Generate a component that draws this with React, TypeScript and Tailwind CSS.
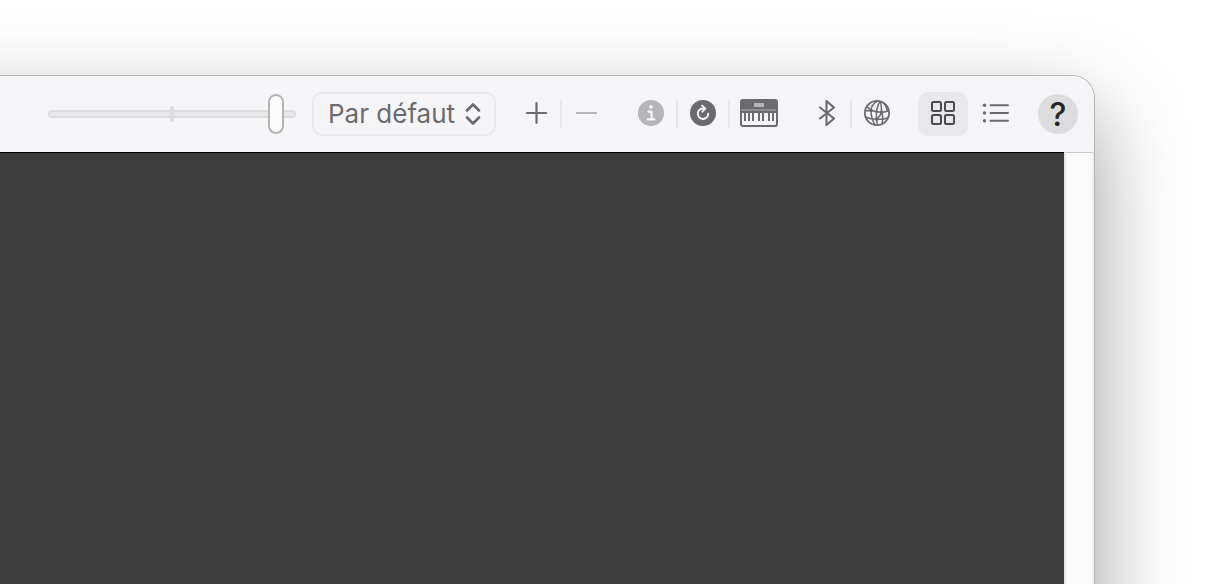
import type { ReactNode } from 'react';

interface ToolButtonProps {
  label: string;
  className: string;
  disabled?: boolean;
  children: ReactNode;
}

function ToolButton({ label, className, disabled, children }: ToolButtonProps) {
  return (
    <button type="button" aria-label={label} disabled={disabled} className={`flex h-11 shrink-0 items-center justify-center pb-0.5 ${className}`}>
      {children}
    </button>
  );
}

function Divider() {
  return <span className="h-7 w-0.5 shrink-0 bg-[#e6e6e8]" />;
}

function SizeSlider() {
  return (
    <div className="relative flex h-10 w-[248px] shrink-0 items-center">
      <span className="absolute inset-x-0 top-4 h-2 rounded-full border-2 border-[#dcdcde] bg-[#e8e8ea]" />
      <span className="absolute left-[122px] top-3 h-4 w-1 rounded-full bg-[#dcdcde]" />
      <input
        type="range"
        aria-label="Taille des icônes"
        min={0}
        max={100}
        defaultValue={95}
        className="relative h-10 w-full appearance-none bg-transparent [&::-webkit-slider-thumb]:h-10 [&::-webkit-slider-thumb]:w-4 [&::-webkit-slider-thumb]:appearance-none [&::-webkit-slider-thumb]:rounded-full [&::-webkit-slider-thumb]:border-2 [&::-webkit-slider-thumb]:border-[#b5b5b7] [&::-webkit-slider-thumb]:bg-[#fafafb]"
      />
    </div>
  );
}

function LayoutSelect() {
  return (
    <div className="relative h-11 w-[184px] shrink-0">
      <select
        aria-label="Configuration"
        className="h-full w-full appearance-none rounded-[10px] border-2 border-[#e8e8ea] bg-transparent pl-3.5 text-[26px] leading-9 text-[#6b6b6d]"
      >
        <option>Par défaut</option>
      </select>
      <svg className="pointer-events-none absolute right-3.5 top-2.5" width="18" height="24" viewBox="0 0 18 24" fill="none" stroke="#6b6b6d" strokeWidth="2.7" strokeLinecap="round" strokeLinejoin="round">
        <path d="M3 8.5 9 2.5l6 6M3 15.5l6 6 6-6" />
      </svg>
    </div>
  );
}

function PlusIcon() {
  return (
    <svg width="22" height="22" viewBox="0 0 22 22" stroke="#6b6b6d" strokeWidth="2.2" strokeLinecap="round">
      <path d="M11.5 1.2v19.6M2 11h19" />
    </svg>
  );
}

function MinusIcon() {
  return (
    <svg width="22" height="22" viewBox="0 0 22 22" stroke="#b5b5b7" strokeWidth="2.2" strokeLinecap="round">
      <path d="M2 11h19" />
    </svg>
  );
}

function InfoIcon() {
  return (
    <svg width="26" height="26" viewBox="0 0 26 26" fill="none">
      <circle cx="13" cy="13" r="13" fill="#b5b5b7" />
      <circle cx="12.8" cy="6.8" r="1.9" fill="#f6f6f8" />
      <path d="M10.4 11.6h3.2v7.7M9.8 19.4h6.6" stroke="#f6f6f8" strokeWidth="2.2" strokeLinecap="round" strokeLinejoin="round" />
    </svg>
  );
}

function ReloadIcon() {
  return (
    <svg width="26" height="26" viewBox="0 0 26 26" fill="none">
      <circle cx="13" cy="13" r="13" fill="#6b6b6d" />
      <path d="M13.8 8.6A5.2 5.2 0 1 0 18.2 13.8M12.2 5.6l3.2 3-3.2 3.1" stroke="#f6f6f8" strokeWidth="1.9" strokeLinecap="round" strokeLinejoin="round" />
    </svg>
  );
}

function KeyboardIcon() {
  return (
    <svg width="38" height="28" viewBox="0 0 38 28">
      <rect width="38" height="28" rx="3" fill="#6b6b6d" />
      <rect x="14" y="4" width="10" height="4" fill="#b5b5b7" />
      <rect x="1" y="10" width="35" height="2" fill="#8d8d8f" />
      <path d="M2 14h34v10.5a1.5 1.5 0 0 1-1.5 1.5h-31A1.5 1.5 0 0 1 2 24.5z" fill="#f6f6f8" />
      <path d="M4 14h2v8H4zM8 14h2v8H8zM12 14h2v8h-2zM18 14h2v8h-2zM22 14h2v8h-2zM28 14h2v8h-2zM32 14h2v8h-2z" fill="#6b6b6d" />
    </svg>
  );
}

function BluetoothIcon() {
  return (
    <svg width="18" height="28" viewBox="0 0 18 28" fill="none" stroke="#6b6b6d" strokeWidth="2.1" strokeLinecap="round" strokeLinejoin="round">
      <path d="M2 8.5 16 19.5 8.5 26V2L16 8.5 2 19.5" />
    </svg>
  );
}

function NetworkIcon() {
  return (
    <svg width="26" height="26" viewBox="0 0 26 26" fill="none" stroke="#6b6b6d" strokeWidth="1.5">
      <circle cx="13" cy="13" r="12.1" strokeWidth="1.8" />
      <path d="M3 6.5c1.500 2 2.500 3.200 4.200 4 3 1 6.300 1.500 10.300 1.700 3 .1 5.500-.6 7.500-1.700M1 10.500c2 .5 4 .5 6.200 0M1.500 17c3.500 1.600 7 2.300 11.300 2.300 4.500 0 8.200-.3 11-1.300" />
      <path d="M13.500 1C9 3.500 7 7 7 11s1.500 9.500 4 14M16 1.200c-3 5-4 9.800-3.600 17.300.1 2.500.6 5 1.200 6.500M16.500 1.200c.8 4 1.200 7.500 1 11-.8 3-2.500 5-4.900 7.300M18.500 2c3 3 4.500 6 4.700 9M17.500 12.200c1.500 3.500 1.700 7 .5 11.500" />
      <g fill="#6b6b6d" stroke="none">
        <circle cx="7.2" cy="10.5" r="1.7" />
        <circle cx="17.5" cy="12.2" r="1.8" />
        <circle cx="12.8" cy="19.3" r="1.8" />
      </g>
    </svg>
  );
}

function GridIcon() {
  return (
    <svg width="24" height="24" viewBox="0 0 24 24" fill="none" stroke="#4a4a4c" strokeWidth="2">
      <rect x="1" y="1" width="9" height="9" rx="1.5" />
      <rect x="14" y="1" width="9" height="9" rx="1.5" />
      <rect x="1" y="14" width="9" height="9" rx="1.5" />
      <rect x="14" y="14" width="9" height="9" rx="1.5" />
    </svg>
  );
}

function ListIcon() {
  return (
    <svg width="28" height="20" viewBox="0 0 28 20" stroke="#6b6b6d" strokeWidth="2" strokeLinecap="round">
      <path d="M8.5 2.3H26M8.5 10H26M8.5 17.7H26" />
      <g fill="#6b6b6d" stroke="none">
        <circle cx="2.5" cy="2.3" r="1.7" />
        <circle cx="2.5" cy="10" r="1.7" />
        <circle cx="2.5" cy="17.7" r="1.7" />
      </g>
    </svg>
  );
}

export default function App() {
  return (
    <div className="flex h-screen flex-col overflow-hidden bg-white pr-28 pt-[76px] font-['Inter',sans-serif]">
      {/* the window runs past the left and bottom edges of the screen */}
      <div className="-mb-40 -ml-40 flex flex-1 flex-col rounded-tr-[22px] bg-[#f5f5f8] shadow-[0_0_0_1px_#b4b4b4,0_36px_90px_rgba(0,0,0,0.4)]">
        <header className="flex h-[76px] shrink-0 items-center justify-end gap-4 rounded-tr-[22px] pr-4 shadow-[inset_0_1px_0_#ffffff]">
          <SizeSlider />
          <LayoutSelect />
          <div className="flex shrink-0 items-center">
            <ToolButton label="Ajouter" className="w-12"><PlusIcon /></ToolButton>
            <Divider />
            <ToolButton label="Supprimer" className="w-12" disabled><MinusIcon /></ToolButton>
          </div>
          <div className="flex shrink-0 items-center">
            <ToolButton label="Informations" className="w-[50px]" disabled><InfoIcon /></ToolButton>
            <Divider />
            <ToolButton label="Réanalyser" className="w-[50px]"><ReloadIcon /></ToolButton>
            <Divider />
            <ToolButton label="Tester la configuration" className="w-[58px]"><KeyboardIcon /></ToolButton>
          </div>
          <div className="flex shrink-0 items-center">
            <ToolButton label="Bluetooth" className="w-[46px]"><BluetoothIcon /></ToolButton>
            <Divider />
            <ToolButton label="Réseau" className="w-[50px]"><NetworkIcon /></ToolButton>
          </div>
          <div className="flex shrink-0 items-center">
            <ToolButton label="Icônes" className="w-[50px] rounded-[10px] bg-[#e8e8ea]"><GridIcon /></ToolButton>
            <ToolButton label="Liste" className="w-14"><ListIcon /></ToolButton>
          </div>
          <button type="button" aria-label="Aide" className="-ml-0.5 flex size-10 shrink-0 items-center justify-center rounded-full bg-[#dcdcde] pt-0.5 text-[32px] font-medium leading-9 text-[#262628]">
            ?
          </button>
        </header>
        <div className="flex flex-1">
          <main className="flex-1 border-t border-black bg-[#3d3d3d]" />
          <aside className="w-[30px] border-x-2 border-t border-l-[#e6e6e6] border-r-[#f0f0f0] border-t-[#c8c8c8] bg-[#fafafa]" />
        </div>
      </div>
    </div>
  );
}
